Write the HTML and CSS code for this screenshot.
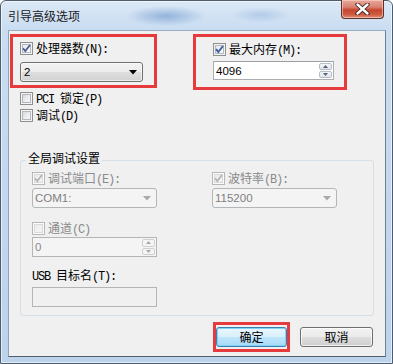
FILE: index.html
```html
<!DOCTYPE html>
<html lang="zh-CN">
<head>
<meta charset="utf-8">
<title>引导高级选项</title>
<link rel="stylesheet" href="styles.css">
</head>
<body>
<div class="window">
  <div class="titlebar">
    <div class="title">引导高级选项</div>
    <div class="close" aria-label="关闭">
      <svg width="17" height="12" viewBox="0 0 17 12">
        <path d="M3.5 1.5 L13.5 10.5 M13.5 1.5 L3.5 10.5" stroke="#3b1f1c" stroke-width="4.2" stroke-linecap="round"/>
        <path d="M3.5 1.5 L13.5 10.5 M13.5 1.5 L3.5 10.5" stroke="#ffffff" stroke-width="2.4" stroke-linecap="round"/>
      </svg>
    </div>
  </div>
  <div class="client">
    <div class="top-row">
      <div class="mark mark-cpu">
        <div class="check-row">
          <span class="cb checked"><svg width="11" height="11" viewBox="0 0 11 11"><path d="M2 5.2 L4.3 8 L9 2" fill="none" stroke="#4a5f97" stroke-width="1.8"/></svg></span>
          <span>处理器数<span class="en">(N):</span></span>
        </div>
        <div class="select sel-cpu"><span>2</span><svg width="8" height="5" viewBox="0 0 8 5"><path d="M0 0 H8 L4 4.5 Z" fill="#000"/></svg></div>
      </div>
      <div class="mark mark-mem">
        <div class="check-row">
          <span class="cb checked"><svg width="11" height="11" viewBox="0 0 11 11"><path d="M2 5.2 L4.3 8 L9 2" fill="none" stroke="#3f5fa6" stroke-width="2"/></svg></span>
          <span>最大内存<span class="en">(M):</span></span>
        </div>
        <div class="spin spin-mem">
          <span class="val">4096</span>
          <span class="btns">
            <span class="sb"><svg width="5" height="3" viewBox="0 0 5 3"><path d="M0 3 H5 L2.5 0 Z" fill="#4d6185"/></svg></span>
            <span class="sb"><svg width="5" height="3" viewBox="0 0 5 3"><path d="M0 0 H5 L2.5 3 Z" fill="#4d6185"/></svg></span>
          </span>
        </div>
      </div>
    </div>

    <div class="opts">
      <div class="check-row"><span class="cb"></span><span><span class="en">PCI </span>锁定<span class="en">(P)</span></span></div>
      <div class="check-row"><span class="cb"></span><span>调试<span class="en">(D)</span></span></div>
    </div>

    <fieldset class="group">
      <legend>全局调试设置</legend>
      <div class="group-grid">
        <div class="col">
          <div class="check-row dis"><span class="cb checked disabled"><svg width="11" height="11" viewBox="0 0 11 11"><path d="M2 5.2 L4.3 8 L9 2" fill="none" stroke="#b4b4b4" stroke-width="1.8"/></svg></span><span>调试端口<span class="en">(E):</span></span></div>
          <div class="select disabled sel-gap"><span>COM1:</span><svg width="8" height="5" viewBox="0 0 8 5"><path d="M0 0 H8 L4 4.5 Z" fill="#a9a9a9"/></svg></div>
          <div class="check-row dis row-chan"><span class="cb disabled"></span><span>通道<span class="en">(C)</span></span></div>
          <div class="spin disabled spin-chan">
            <span class="val">0</span>
            <span class="btns">
              <span class="sb"><svg width="5" height="3" viewBox="0 0 5 3"><path d="M0 3 H5 L2.5 0 Z" fill="#a8a8a8"/></svg></span>
              <span class="sb"><svg width="5" height="3" viewBox="0 0 5 3"><path d="M0 0 H5 L2.5 3 Z" fill="#a8a8a8"/></svg></span>
            </span>
          </div>
          <div class="usb-label"><span class="en">USB </span>目标名<span class="en">(T):</span></div>
          <div class="textbox disabled"></div>
        </div>
        <div class="col">
          <div class="check-row dis"><span class="cb checked disabled"><svg width="11" height="11" viewBox="0 0 11 11"><path d="M2 5.2 L4.3 8 L9 2" fill="none" stroke="#b4b4b4" stroke-width="1.8"/></svg></span><span>波特率<span class="en">(B):</span></span></div>
          <div class="select disabled sel-gap"><span>115200</span><svg width="8" height="5" viewBox="0 0 8 5"><path d="M0 0 H8 L4 4.5 Z" fill="#a9a9a9"/></svg></div>
        </div>
      </div>
    </fieldset>

    <div class="buttons">
      <div class="mark mark-btn"><button class="btn default">确定</button></div>
      <button class="btn">取消</button>
    </div>
  </div>
</div>
</body>
</html>
```

FILE: styles.css
```css
html, body {
  margin: 0;
  padding: 0;
  background: #ffffff;
}

body {
  font-family: "Noto Sans CJK SC", "Liberation Sans", sans-serif;
  font-size: 12px;
  color: #000;
}

.window {
  width: 393px;
  height: 364px;
  box-sizing: border-box;
  display: flex;
  flex-direction: column;
  border: 1px solid #4e5d6e;
  border-radius: 6px 6px 0 0;
  background:
    radial-gradient(ellipse 40px 10px at 165px 15px, rgba(95, 140, 200, 0.55), rgba(95, 140, 200, 0)),
    radial-gradient(ellipse 30px 8px at 260px 14px, rgba(120, 160, 210, 0.35), rgba(120, 160, 210, 0)),
    linear-gradient(#dbe8f6 0px, #c9dcf1 30px, #bcd3ec 100%);
  box-shadow: inset 0 0 0 1px rgba(255, 255, 255, 0.6);
}

.titlebar {
  height: 29px;
  display: flex;
  justify-content: space-between;
  align-items: flex-start;
}

.title {
  align-self: center;
  padding-left: 7px;
  line-height: 14px;
  font-size: 12px;
  color: #1a1a1a;
}

.close {
  width: 43px;
  height: 19px;
  box-sizing: border-box;
  margin-right: 8px;
  margin-top: -1px;
  border: 1px solid #5d302b;
  border-top: none;
  border-radius: 0 0 4px 4px;
  background: linear-gradient(#e9a89b 0%, #d98070 40%, #c6462f 55%, #cd5a40 80%, #e0907a 100%);
  box-shadow: inset 0 0 0 1px rgba(255, 220, 210, 0.55);
  display: flex;
  align-items: center;
  justify-content: center;
}

.client {
  flex: 1;
  margin: 0 6px 6px 7px;
  box-sizing: border-box;
  background: #f0f0f0;
  border: 1px solid;
  border-color: #98adc4 #6f7f92 #525e6b #8ea2b8;
  display: flex;
  flex-direction: column;
}

.en {
  font-family: "Liberation Mono", monospace;
  font-size: 12px;
  letter-spacing: -1.2px;
  white-space: pre;
}

.check-row {
  height: 13px;
  display: flex;
  align-items: center;
  gap: 3px;
  line-height: 13px;
  white-space: nowrap;
}

.check-row.dis {
  color: #8a8a8a;
}

.cb {
  width: 13px;
  height: 13px;
  flex: none;
  box-sizing: border-box;
  border: 1px solid #8e8f8f;
  background: linear-gradient(135deg, #cdd1d6 0%, #eceef0 55%, #fbfbfb 100%);
  box-shadow: inset 0 0 0 1px #f4f4f4, inset 0 0 0 2px #b4b9bf;
  display: flex;
  align-items: center;
  justify-content: center;
}

.cb.checked {
  background: linear-gradient(135deg, #dfe2e6 0%, #f4f5f6 60%, #ffffff 100%);
}

.cb.disabled {
  border-color: #b8b8b8;
  background: linear-gradient(135deg, #eaeaea 0%, #f6f6f6 100%);
  box-shadow: inset 0 0 0 1px #fbfbfb, inset 0 0 0 2px #dadada;
}

.mark {
  box-sizing: border-box;
  border: 3px solid #e63a3c;
}

.top-row {
  display: flex;
  align-items: flex-start;
  gap: 36px;
  padding: 3px 0 0 1px;
}

.mark-cpu {
  width: 147px;
  height: 54px;
  padding: 5px 0 0 7px;
  display: flex;
  flex-direction: column;
}

.mark-mem {
  width: 154px;
  height: 56px;
  padding: 6px 0 0 17px;
  display: flex;
  flex-direction: column;
}

.select {
  box-sizing: border-box;
  height: 20px;
  border: 1px solid #707070;
  border-radius: 3px;
  background: linear-gradient(#f3f3f3 0%, #ececec 48%, #dedede 52%, #d2d2d2 100%);
  box-shadow: inset 0 0 0 1px rgba(255, 255, 255, 0.6);
  display: flex;
  align-items: center;
  justify-content: space-between;
  padding: 0 5px 0 3px;
  font-family: "Liberation Sans", sans-serif;
  font-size: 11.5px;
}

.sel-cpu {
  width: 123px;
  margin-top: 7px;
}

.select.disabled {
  border-color: #b2b6b9;
  background: #f4f4f4;
  box-shadow: none;
  color: #7f7f7f;
  padding-left: 2px;
}

.sel-gap {
  width: 125px;
  margin-top: 3px;
}

.spin {
  box-sizing: border-box;
  display: flex;
  border: 1px solid #abadb3;
  border-top-color: #9da0a7;
  background: #fff;
  font-family: "Liberation Sans", sans-serif;
  font-size: 11.5px;
}

.spin .val {
  flex: 1;
  padding-left: 2px;
  display: flex;
  align-items: center;
}

.spin .btns {
  width: 14px;
  display: flex;
  flex-direction: column;
  gap: 1px;
  padding: 1px 1px 1px 0;
  box-sizing: border-box;
}

.spin .sb {
  flex: 1;
  border: 1px solid #b8bcc4;
  border-radius: 2px;
  background: linear-gradient(#f6f6f6, #e2e4e8);
  display: flex;
  align-items: center;
  justify-content: center;
}

.spin-mem {
  width: 121px;
  height: 19px;
  margin-top: 5px;
}

.spin.disabled {
  border-color: #b5b5b5;
  background: #f4f4f4;
  color: #8a8a8a;
}

.spin.disabled .sb {
  border-color: #d0d0d0;
  background: #f4f4f4;
}

.spin-chan {
  width: 125px;
  height: 20px;
  margin-top: 2px;
}

.row-chan {
  margin-top: 14px;
}

.opts {
  display: flex;
  flex-direction: column;
  gap: 4px;
  padding-left: 11px;
  margin-top: 2px;
}

.group {
  margin: 29px 0 0 11px;
  width: 354px;
  box-sizing: border-box;
  border: 1px solid #d5dfe5;
  border-radius: 3px;
  padding: 2px 0 8px 11px;
  min-width: 0;
}

.group legend {
  padding: 0 2px 5px 2px;
  margin-left: -6px;
  line-height: 14px;
  font-size: 12px;
  color: #000;
}

.group-grid {
  display: grid;
  grid-template-columns: 125px 125px;
  column-gap: 55px;
}

.col {
  display: flex;
  flex-direction: column;
}

.usb-label {
  margin-top: 11px;
  line-height: 14px;
  white-space: nowrap;
}

.textbox {
  box-sizing: border-box;
  width: 125px;
  height: 20px;
  margin-top: 3px;
  border: 1px solid #abadb3;
  background: #fff;
}

.textbox.disabled {
  border-color: #b5b5b5;
  background: #f0f0f0;
}

.buttons {
  display: flex;
  justify-content: flex-end;
  align-items: center;
  gap: 10px;
  padding-right: 12px;
  margin-top: 6px;
}

.mark-btn {
  padding: 2px 0;
}

.btn {
  box-sizing: border-box;
  width: 73px;
  height: 20px;
  padding: 0;
  border: 1px solid #707070;
  border-radius: 3px;
  background: linear-gradient(#f2f2f2 0%, #ebebeb 48%, #dddddd 52%, #cfcfcf 100%);
  box-shadow: inset 0 0 0 1px rgba(255, 255, 255, 0.7);
  font-family: "Noto Sans CJK SC", sans-serif;
  font-size: 12px;
  line-height: 14px;
  color: #000;
  display: block;
}

.btn.default {
  width: 71px;
  border-color: #3c7fb1;
  background: linear-gradient(#eaf6fd 0%, #d9f0fc 48%, #bee6fd 52%, #a7d9f5 100%);
  box-shadow: inset 0 0 0 1px #7fd3f7;
}
```
